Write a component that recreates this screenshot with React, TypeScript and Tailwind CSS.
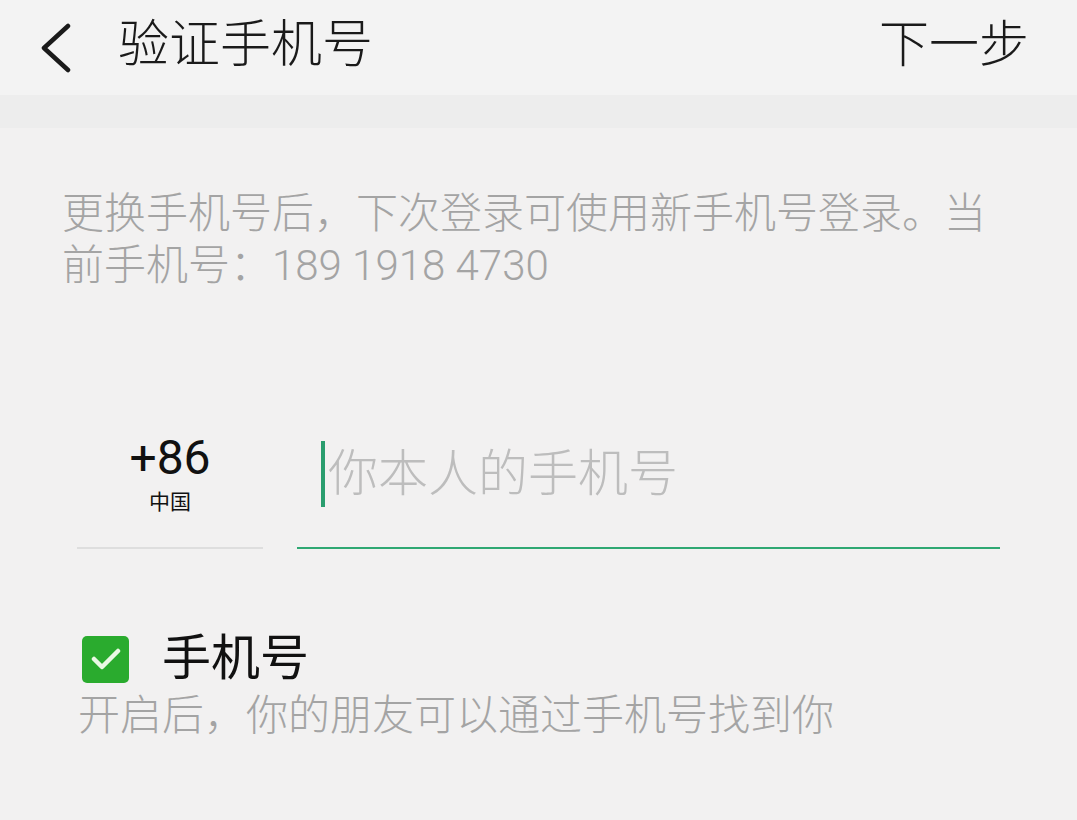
import React from 'react';

const cjk = { fontFamily: 'Roboto, "Noto Sans CJK SC", "Noto Sans", sans-serif' };

const BackIcon: React.FC = () => (
  <svg width="34" height="50" viewBox="0 0 34 50" fill="none">
    <path d="M28 3 L4 25 L28 47" stroke="#1a1a1a" strokeWidth="4.5" strokeLinecap="round" strokeLinejoin="round" />
  </svg>
);

const App: React.FC = () => {
  return (
    <div className="w-[1077px] h-[820px] overflow-hidden bg-[#f2f1f1] font-light" style={cjk}>
      {/* Header */}
      <div className="h-[95px] bg-[#f3f3f3] flex items-center justify-between pl-[40px] pr-[48px]">
        <div className="flex items-center">
          <BackIcon />
          <span className="ml-[44px] text-[51px] leading-none text-[#1a1a1a] -mt-[6px]">验证手机号</span>
        </div>
        <span className="text-[50px] leading-none text-[#1a1a1a] -mt-[6px]">下一步</span>
      </div>
      <div className="h-[33px] bg-[#ededed]" />

      {/* Description */}
      <div className="pl-[62px] pt-[60px]">
        <p className="w-[930px] text-[42px] leading-[52px] text-[#a4a4a4]">
          更换手机号后，下次登录可使用新手机号登录。当前手机号：189 1918 4730
        </p>
      </div>

      {/* Phone input row */}
      <div className="flex items-end pl-[77px] mt-[141px]">
        <div className="w-[186px] flex flex-col items-center border-b-2 border-[#dedede] pb-[32px]">
          <span className="text-[48px] leading-[50px] font-normal text-[#111]">+86</span>
          <span className="text-[21px] leading-[26px] mt-[6px] font-normal text-[#111]">中国</span>
        </div>
        <div className="ml-[34px] w-[703px] flex items-center border-b-2 border-[#2fa873] pb-[40px] pl-[24px]">
          <span className="w-[4px] h-[66px] bg-[#2a9d6e]" />
          <span className="ml-[3px] text-[50px] leading-[66px] text-[#bdbdbd]">你本人的手机号</span>
        </div>
      </div>

      {/* Checkbox */}
      <div className="pl-[82px] mt-[84px] flex items-center">
        <div className="w-[47px] h-[47px] rounded-[5px] bg-[#2aab2e] flex items-center justify-center">
          <svg width="30" height="24" viewBox="0 0 30 24" fill="none">
            <path d="M3 12 L11 20 L27 4" stroke="#eaf8e4" strokeWidth="4.5" strokeLinecap="round" strokeLinejoin="round" />
          </svg>
        </div>
        <span className="ml-[33px] text-[49px] leading-[52px] font-normal text-[#111]">手机号</span>
      </div>
      <p className="pl-[78px] mt-[6px] text-[42px] leading-[50px] text-[#a4a4a4]">开启后，你的朋友可以通过手机号找到你</p>
    </div>
  );
};

export default App;
